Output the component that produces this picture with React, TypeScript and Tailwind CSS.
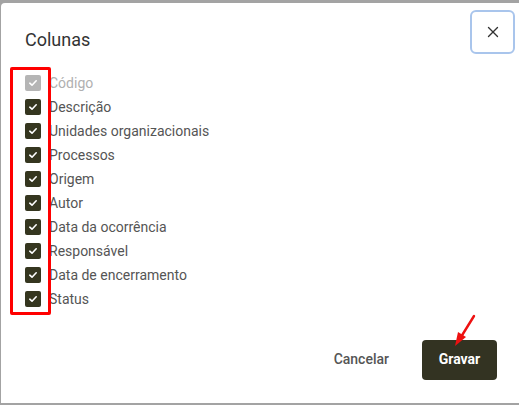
import { X } from "lucide-react";

const colunas = [
  { nome: "Código", disabled: true },
  { nome: "Descrição" },
  { nome: "Unidades organizacionais" },
  { nome: "Processos" },
  { nome: "Origem" },
  { nome: "Autor" },
  { nome: "Data da ocorrência" },
  { nome: "Responsável" },
  { nome: "Data de encerramento" },
  { nome: "Status" },
];

function Check({ disabled }: { disabled?: boolean }) {
  return (
    <span
      className={`flex h-4 w-4 items-center justify-center rounded-[2px] ${
        disabled ? "bg-[#b5b5b5]" : "bg-[#35361f]"
      }`}
    >
      <svg width="10" height="10" viewBox="0 0 10 10" fill="none">
        <path d="M1.8 5.2 L4 7.2 L8.2 2.8" stroke="white" strokeWidth="1.6" strokeLinecap="round" strokeLinejoin="round" />
      </svg>
    </span>
  );
}

export default function App() {
  return (
    <div className="h-[405px] w-[519px] overflow-hidden bg-[#a3a3a3] pt-[3px] pl-[1px] font-['Roboto',sans-serif]">
      <div className="relative flex h-[400px] flex-col rounded-tl-[4px] bg-white">
        <div className="flex items-start justify-between pl-[24px] pr-[4px] pt-[7px]">
          <h2 className="mt-[20px] text-[18px] leading-[20px] text-[#333333]">Colunas</h2>
          <button className="flex h-[44px] w-[45px] items-center justify-center rounded-[6px] border-2 border-[#a9c5ec] text-[#333]">
            <X size={18} strokeWidth={1.8} />
          </button>
        </div>

        <ul className="mt-[17px] flex flex-col pl-[24px]">
          {colunas.map(c => (
            <li key={c.nome} className="flex h-[24px] items-center gap-[8px]">
              <Check disabled={c.disabled} />
              <span className={`text-[14px] ${c.disabled ? "text-[#b0b0b0]" : "text-[#555555]"}`}>{c.nome}</span>
            </li>
          ))}
        </ul>

        <div className="mt-auto mb-[23px] flex items-center justify-end gap-[17px] pr-[22px]">
          <button className="px-[16px] py-[10px] text-[14px] font-medium text-[#555555]">Cancelar</button>
          <button className="h-[40px] w-[75px] rounded-[4px] bg-[#333322] text-[14px] font-bold text-white">Gravar</button>
        </div>

        {/* anotações em vermelho */}
        <div className="absolute left-[9px] top-[64px] h-[248px] w-[41px] rounded-[2px] border-[3px] border-[#ff0000]" />
        <svg className="absolute left-[448px] top-[310px]" width="30" height="36" viewBox="0 0 30 36">
          <line x1="25" y1="3" x2="12" y2="24" stroke="#ee1111" strokeWidth="2.4" strokeLinecap="round" />
          <polygon points="6,33 9,19 17,24" fill="#ee1111" />
        </svg>
      </div>
    </div>
  );
}
